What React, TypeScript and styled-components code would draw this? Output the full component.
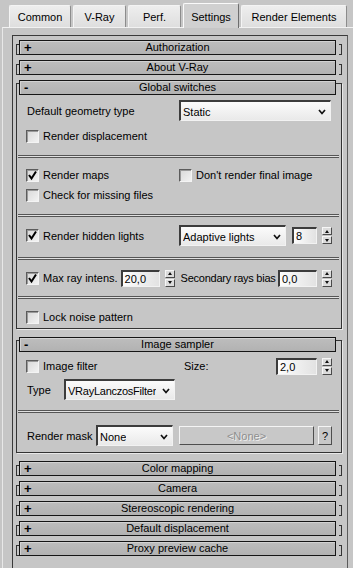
import React from 'react';
import styled, { createGlobalStyle, css } from 'styled-components';

const GlobalStyle = createGlobalStyle`
	html, body {
		margin: 0;
		padding: 0;
		background: #c6c6c6;
	}
	body {
		font-family: 'Liberation Sans', Arial, sans-serif;
		font-size: 11px;
		color: #000;
	}
`;

const TABS = ['Common', 'V-Ray', 'Perf.', 'Settings', 'Render Elements'];
const TAB_WIDTHS = [62, 53, 53, 56, 106];

const Chevron = (): JSX.Element => (
	<svg width="8" height="6" viewBox="0 0 8 6">
		<polyline points="1,1 4,4.5 7,1" fill="none" stroke="#111" strokeWidth="1.7" />
	</svg>
);

const Tick = (): JSX.Element => (
	<svg width="11" height="11" viewBox="0 0 11 11">
		<polyline points="2,5 4.5,8.5 9,1.5" fill="none" stroke="#000" strokeWidth="2" />
	</svg>
);

const CheckBox = ({ checked, label }: { checked?: boolean; label: string }): JSX.Element => (
	<StyledCheck>
		<StyledBox>{checked && <Tick />}</StyledBox>
		<span>{label}</span>
	</StyledCheck>
);

const Dropdown = ({ value, width, tight }: { value: string; width: number; tight?: boolean }): JSX.Element => (
	<StyledSelect $w={width}>
		<StyledSelectText $tight={tight}>{value}</StyledSelectText>
		<Chevron />
	</StyledSelect>
);

const Spinner = ({ value, width }: { value: string; width: number }): JSX.Element => (
	<StyledSpinner>
		<StyledField $w={width}>{value}</StyledField>
		<StyledArrows>
			<StyledArrow $up />
			<StyledArrow />
		</StyledArrows>
	</StyledSpinner>
);

const Rollout = ({
	title,
	open,
	children,
}: {
	title: string;
	open?: boolean;
	children?: React.ReactNode;
}): JSX.Element => (
	<StyledFrame $open={open}>
		<StyledHeader>
			<StyledSign>{open ? '-' : '+'}</StyledSign>
			<StyledTitle>{title}</StyledTitle>
		</StyledHeader>
		{open && <StyledBody>{children}</StyledBody>}
	</StyledFrame>
);

const App = (): JSX.Element => (
	<>
		<GlobalStyle />
		<StyledDialog>
			<StyledTabStrip>
				{TABS.map((t, i) => (
					<StyledTab key={t} $w={TAB_WIDTHS[i]} $active={t === 'Settings'}>
						{t}
					</StyledTab>
				))}
			</StyledTabStrip>
			<StyledPage>
				<StyledPanel>
					<Rollout title="Authorization" />
					<Rollout title="About V-Ray" />
					<Rollout title="Global switches" open>
						<StyledGroup $pad="5px 0 9px" $gap={5}>
							<StyledRow $h={21}>
								<StyledCell>
									<StyledLabel>Default geometry type</StyledLabel>
								</StyledCell>
								<Dropdown value="Static" width={152} />
							</StyledRow>
							<StyledRow>
								<CheckBox label="Render displacement" />
							</StyledRow>
						</StyledGroup>
						<StyledSeparator />
						<StyledGroup $pad="7px 0 9px">
							<StyledRow>
								<StyledCell>
									<CheckBox checked label="Render maps" />
								</StyledCell>
								<CheckBox label="Don't render final image" />
							</StyledRow>
							<StyledRow>
								<CheckBox label="Check for missing files" />
							</StyledRow>
						</StyledGroup>
						<StyledSeparator />
						<StyledGroup $pad="8px 0 11px">
							<StyledRow $h={21}>
								<StyledCell>
									<CheckBox checked label="Render hidden lights" />
								</StyledCell>
								<Dropdown value="Adaptive lights" width={107} />
								<StyledPush>
									<Spinner value="8" width={25} />
								</StyledPush>
							</StyledRow>
						</StyledGroup>
						<StyledSeparator />
						<StyledGroup $pad="8px 0 8px">
							<StyledRow>
								<CheckBox checked label="Max ray intens." />
								<StyledGap $w={3} />
								<Spinner value="20,0" width={39} />
								<StyledGap $w={5} />
								<StyledLabel $tight>Secondary rays bias</StyledLabel>
								<StyledPush>
									<Spinner value="0,0" width={39} />
								</StyledPush>
							</StyledRow>
						</StyledGroup>
						<StyledSeparator />
						<StyledGroup $pad="8px 0 1px">
							<StyledRow>
								<CheckBox label="Lock noise pattern" />
							</StyledRow>
						</StyledGroup>
					</Rollout>
					<Rollout title="Image sampler" open>
						<StyledGroup $pad="4px 0 10px" $gap={3}>
							<StyledRow>
								<StyledCell>
									<CheckBox label="Image filter" />
								</StyledCell>
								<StyledLabel $indent={5}>Size:</StyledLabel>
								<StyledPush>
									<Spinner value="2,0" width={41} />
								</StyledPush>
							</StyledRow>
							<StyledRow $h={21}>
								<StyledFixed $w={38}>
									<StyledLabel>Type</StyledLabel>
								</StyledFixed>
								<Dropdown value="VRayLanczosFilter" width={111} tight />
							</StyledRow>
						</StyledGroup>
						<StyledSeparator />
						<StyledGroup $pad="12px 0 6px">
							<StyledRow $h={21}>
								<StyledFixed $w={70}>
									<StyledLabel>Render mask</StyledLabel>
								</StyledFixed>
								<Dropdown value="None" width={77} />
								<StyledGap $w={6} />
								<StyledButton $w={135} disabled>
									&lt;None&gt;
								</StyledButton>
								<StyledPush>
									<StyledButton $w={14}>?</StyledButton>
								</StyledPush>
							</StyledRow>
						</StyledGroup>
					</Rollout>
					<Rollout title="Color mapping" />
					<Rollout title="Camera" />
					<Rollout title="Stereoscopic rendering" />
					<Rollout title="Default displacement" />
					<Rollout title="Proxy preview cache" />
				</StyledPanel>
			</StyledPage>
		</StyledDialog>
	</>
);

export default App;

const StyledDialog = styled.div`
	width: 353px;
	height: 568px;
	overflow: hidden;
	background: #c6c6c6;
`;

const StyledTabStrip = styled.div`
	display: flex;
	align-items: flex-end;
	gap: 2px;
	height: 28px;
	padding-left: 9px;
	box-sizing: border-box;
	position: relative;
	z-index: 1;
	margin-bottom: -1px;
`;

const StyledTab = styled.div<{ $w: number; $active?: boolean }>`
	width: ${p => p.$w}px;
	height: 22px;
	box-sizing: border-box;
	flex-shrink: 0;
	display: flex;
	align-items: center;
	justify-content: center;
	padding-top: 1px;
	background: linear-gradient(#eeeeee, #dedede);
	border: 1px solid #8c8c8c;
	border-top-color: #f4f4f4;
	border-left-color: #f4f4f4;
	border-bottom: none;
	border-radius: 2px 2px 0 0;
	margin-bottom: 1px;
	${p =>
		p.$active &&
		css`
			height: 25px;
			margin-bottom: 0;
			background: #d0d0d0;
			border-color: #fafafa #6e6e6e #6e6e6e #fafafa;
		`}
`;

const StyledPage = styled.div`
	margin-left: 2px;
	height: 541px;
	border-top: 1px solid #f2f2f2;
	border-left: 1px solid #e8e8e8;
	padding: 7px 0 0 9px;
`;

const StyledPanel = styled.div`
	width: 336px;
	height: 560px;
	box-sizing: border-box;
	border: 1px solid #3a3a3a;
	border-right-color: #5a5a5a;
	padding: 4px 0 0 3px;
`;

const StyledFrame = styled.div<{ $open?: boolean }>`
	position: relative;
	width: 326px;
	margin-bottom: 5px;
	&::before,
	&::after {
		content: '';
		position: absolute;
		top: 4px;
		width: 2px;
		height: 9px;
		border: 1px solid #333;
	}
	&::before {
		left: 0;
		border-right: none;
	}
	&::after {
		right: 0;
		border-left: none;
	}
	${p =>
		p.$open &&
		css`
			margin-bottom: 8px;
			&::before {
				top: 3px;
				bottom: 0;
				left: 0;
				right: 0;
				width: auto;
				height: auto;
				border: 1px solid #333;
				box-shadow: 1px 1px 0 #e8e8e8;
			}
			&::after {
				display: none;
			}
		`}
`;

const StyledHeader = styled.div`
	position: relative;
	z-index: 1;
	width: 317px;
	height: 15px;
	margin-left: 3px;
	box-sizing: border-box;
	border: 1px solid #151515;
	background: linear-gradient(#bdbdbd, #b2b2b2);
	box-shadow: inset 1px 1px 0 #d2d2d2;
	display: flex;
	align-items: center;
	justify-content: center;
`;

const StyledSign = styled.span`
	position: absolute;
	left: 4px;
	top: -1px;
	font-size: 13px;
	font-weight: bold;
	line-height: 15px;
`;

const StyledTitle = styled.span`
	line-height: 13px;
`;

const StyledBody = styled.div`
	position: relative;
	padding: 0 10px 1px 1px;
`;

const StyledGroup = styled.div<{ $pad: string; $gap?: number }>`
	display: flex;
	flex-direction: column;
	gap: ${p => p.$gap ?? 0}px;
	padding: ${p => p.$pad};
	padding-left: 9px;
`;

const StyledSeparator = styled.div`
	height: 1px;
	margin: 0 -7px 0 1px;
	border-top: 1px solid #555;
	border-bottom: 1px solid #555;
	background: #e0e0e0;
`;

const StyledRow = styled.div<{ $h?: number }>`
	display: flex;
	align-items: center;
	flex-shrink: 0;
	height: ${p => p.$h ?? 20}px;
`;

const StyledCell = styled.div`
	width: 153px;
	flex-shrink: 0;
	display: flex;
	align-items: center;
`;

const StyledFixed = styled.div<{ $w: number }>`
	width: ${p => p.$w}px;
	flex-shrink: 0;
`;

const StyledPush = styled.div`
	margin-left: auto;
	display: flex;
	align-items: center;
`;

const StyledGap = styled.div<{ $w: number }>`
	width: ${p => p.$w}px;
	flex-shrink: 0;
`;

const StyledLabel = styled.span<{ $indent?: number; $tight?: boolean }>`
	padding-left: ${p => p.$indent ?? 1}px;
	white-space: nowrap;
	letter-spacing: ${p => (p.$tight ? '-0.25px' : 'normal')};
`;

const StyledCheck = styled.label`
	display: flex;
	align-items: center;
	gap: 4px;
	white-space: nowrap;
`;

const StyledBox = styled.span`
	width: 13px;
	height: 13px;
	box-sizing: border-box;
	display: flex;
	align-items: center;
	justify-content: center;
	border: 1px solid;
	border-color: #5c5c5c #f4f4f4 #f4f4f4 #5c5c5c;
	box-shadow: inset 1px 1px 0 #9a9a9a;
	background: linear-gradient(135deg, #d8d8d8, #f2f2f2);
`;

const sunken = css`
	box-sizing: border-box;
	border-top: 2px solid #3c3c3c;
	border-left: 2px solid #3c3c3c;
	border-right: 1px solid #f2f2f2;
	border-bottom: 1px solid #f2f2f2;
`;

const StyledSelect = styled.div<{ $w: number }>`
	${sunken};
	width: ${p => p.$w}px;
	height: 21px;
	flex-shrink: 0;
	display: flex;
	align-items: center;
	justify-content: space-between;
	gap: 1px;
	padding: 1px 4px 0 2px;
	background: linear-gradient(#fbfbfb, #e9e9e9);
	white-space: nowrap;
`;

const StyledSelectText = styled.span<{ $tight?: boolean }>`
	overflow: hidden;
	letter-spacing: ${p => (p.$tight ? '-0.25px' : 'normal')};
`;

const StyledSpinner = styled.div`
	display: flex;
	align-items: center;
	gap: 5px;
`;

const StyledField = styled.div<{ $w: number }>`
	${sunken};
	width: ${p => p.$w}px;
	height: 17px;
	padding-left: 2px;
	line-height: 14px;
	background: linear-gradient(90deg, #fdfdfd, #e2e2e2);
`;

const StyledArrows = styled.div`
	width: 10px;
	height: 17px;
	display: flex;
	flex-direction: column;
	gap: 1px;
`;

const StyledArrow = styled.div<{ $up?: boolean }>`
	flex: 1;
	box-sizing: border-box;
	border: 1px solid;
	border-color: #f6f6f6 #4a4a4a #4a4a4a #f6f6f6;
	background: #dcdcdc;
	display: flex;
	align-items: center;
	justify-content: center;
	&::after {
		content: '';
		border-left: 2px solid transparent;
		border-right: 2px solid transparent;
		${p =>
			p.$up
				? css`
						border-bottom: 3px solid #111;
				  `
				: css`
						border-top: 3px solid #111;
				  `}
	}
`;

const StyledButton = styled.div<{ $w: number; disabled?: boolean }>`
	width: ${p => p.$w}px;
	height: 19px;
	box-sizing: border-box;
	flex-shrink: 0;
	display: flex;
	align-items: center;
	justify-content: center;
	border: 1px solid;
	border-color: #f4f4f4 #4e4e4e #4e4e4e #f4f4f4;
	background: #c8c8c8;
	${p =>
		p.disabled &&
		css`
			color: #8e8e8e;
			text-shadow: 1px 1px 0 #f0f0f0;
		`}
`;
